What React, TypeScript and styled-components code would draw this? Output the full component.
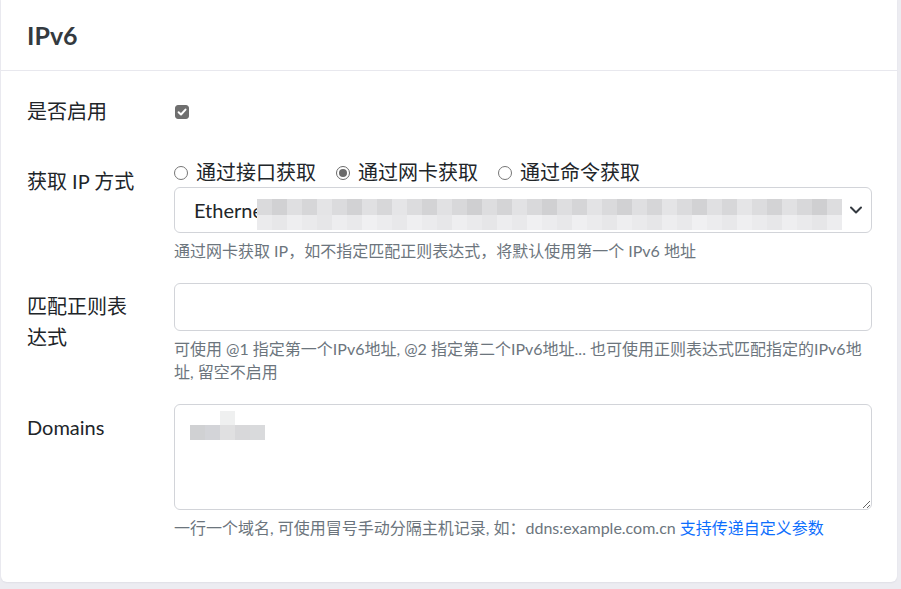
import React from "react";
import styled, { createGlobalStyle } from "styled-components";

const GlobalStyle = createGlobalStyle`
  html, body { margin: 0; padding: 0; background: #ececf1; }
  body {
    font-family: Lato, "Noto Sans CJK SC", sans-serif;
    color: #212529;
  }
  * { box-sizing: border-box; }
`;

const Page = styled.div`
  width: 901px;
  padding: 0 4px 7px 1px;
`;

const Card = styled.section`
  background: #fff;
  border-radius: 0 0 6px 6px;
  box-shadow: 0 1px 2px rgba(30, 30, 60, 0.06);
`;

const CardHeader = styled.header`
  height: 71px;
  display: flex;
  align-items: center;
  padding: 0 26px;
  border-bottom: 1px solid #e8e8ee;
`;

const Title = styled.h5`
  margin: 0;
  font-size: 25px;
  font-weight: 700;
  line-height: 1;
  color: #343a40;
`;

const CardBody = styled.div`
  padding: 17px 25px 22px 26px;
`;

const FormRow = styled.div`
  display: grid;
  grid-template-columns: 110px 1fr;
  column-gap: 37px;
  margin-bottom: 21px;
`;

const Label = styled.label`
  font-size: 20px;
  line-height: 31px;
  padding: 8px 0 9px;
  color: #212529;
`;

const Field = styled.div`
  min-width: 0;
`;

const CheckWrap = styled.div`
  height: 49px;
  display: flex;
  align-items: center;
  padding: 0 0 2px 1px;
`;

const CheckBox = styled.span<{ $checked: boolean }>`
  width: 14px;
  height: 14px;
  border-radius: 3px;
  background: ${(p) => (p.$checked ? "#6f6f6f" : "#fff")};
  border: 1px solid #6f6f6f;
  display: inline-flex;
  align-items: center;
  justify-content: center;
`;

const RadioGroup = styled.div`
  height: 29px;
  display: flex;
  align-items: center;
`;

const RadioItem = styled.label`
  display: inline-flex;
  align-items: center;
  gap: 8px;
  margin-right: 20px;
  font-size: 20px;
  line-height: 29px;
  color: #212529;
`;

const RadioDot = styled.span<{ $checked: boolean }>`
  width: 14px;
  height: 14px;
  border-radius: 50%;
  border: ${(p) => (p.$checked ? "1.5px solid #6a6a6a" : "1px solid #767676")};
  display: inline-flex;
  align-items: center;
  justify-content: center;
  &::after {
    content: "";
    width: 8px;
    height: 8px;
    border-radius: 50%;
    background: ${(p) => (p.$checked ? "#6a6a6a" : "transparent")};
  }
`;

const SelectBox = styled.div`
  position: relative;
  height: 46px;
  border: 1px solid #d2d4d9;
  border-radius: 6px;
  display: flex;
  align-items: center;
  padding-left: 19px;
  font-size: 20px;
  color: #212529;
  overflow: hidden;
`;

const Chevron = styled.svg`
  position: absolute;
  right: 8px;
  top: 50%;
  transform: translateY(-50%);
`;

const MosaicGrid = styled.div<{ $left: number; $top: number }>`
  position: absolute;
  left: ${(p) => p.$left}px;
  top: ${(p) => p.$top}px;
  display: flex;
  flex-direction: column;
`;

const MosaicRow = styled.div<{ $h: number }>`
  display: flex;
  height: ${(p) => p.$h}px;
`;

const MosaicCell = styled.span<{ $c: string }>`
  width: 15px;
  height: 100%;
  background: ${(p) => p.$c};
`;

const TextInput = styled.input`
  display: block;
  width: 100%;
  height: 48px;
  border: 1px solid #d2d4d9;
  border-radius: 6px;
  font-size: 20px;
  padding: 0 19px;
  font-family: inherit;
  outline: none;
`;

const AreaWrap = styled.div`
  position: relative;
`;

const TextArea = styled.textarea`
  display: block;
  width: 100%;
  height: 106px;
  border: 1px solid #d2d4d9;
  border-radius: 6px;
  font-size: 20px;
  padding: 8px 19px;
  font-family: inherit;
  resize: vertical;
  outline: none;
`;

const Help = styled.div`
  margin-top: 6px;
  font-size: 16px;
  line-height: 23px;
  color: #6c757d;
`;

const Link = styled.a`
  color: #0d6efd;
  text-decoration: none;
`;

const shade = (v: number) => `rgb(${v},${v},${Math.min(255, v + 2)})`;

const selectTop = Array.from({ length: 39 }, (_, i) =>
  shade(0xcf + ((i * 37 + 11) % 23))
);
const selectBottom = Array.from({ length: 39 }, (_, i) =>
  shade(0xe6 + ((i * 29 + 5) % 11))
);

const domainRows: { h: number; cells: string[] }[] = [
  { h: 14, cells: ["transparent", "transparent", "#eff0f0", "transparent", "transparent"] },
  { h: 15, cells: ["#d0d1d3", "#d3d4d8", "#e0e0e1", "#d8d8da", "#d9dadc"] },
];

const Mosaic: React.FC<{
  left: number;
  top: number;
  rows: { h: number; cells: string[] }[];
}> = ({ left, top, rows }) => (
  <MosaicGrid $left={left} $top={top} aria-hidden>
    {rows.map((r, ri) => (
      <MosaicRow key={ri} $h={r.h}>
        {r.cells.map((c, ci) => (
          <MosaicCell key={ci} $c={c} />
        ))}
      </MosaicRow>
    ))}
  </MosaicGrid>
);

export default function App() {
  return (
    <>
      <GlobalStyle />
      <Page>
        <Card>
          <CardHeader>
            <Title>IPv6</Title>
          </CardHeader>
          <CardBody>
            <FormRow>
              <Label>是否启用</Label>
              <Field>
                <CheckWrap>
                  <CheckBox $checked>
                    <svg width="10" height="10" viewBox="0 0 10 10">
                      <path
                        d="M1.6 5.2 L4 7.5 L8.5 2.6"
                        fill="none"
                        stroke="#fff"
                        strokeWidth="2"
                        strokeLinecap="round"
                        strokeLinejoin="round"
                      />
                    </svg>
                  </CheckBox>
                </CheckWrap>
              </Field>
            </FormRow>

            <FormRow>
              <Label>获取 IP 方式</Label>
              <Field>
                <RadioGroup>
                  <RadioItem>
                    <RadioDot $checked={false} />
                    通过接口获取
                  </RadioItem>
                  <RadioItem>
                    <RadioDot $checked />
                    通过网卡获取
                  </RadioItem>
                  <RadioItem>
                    <RadioDot $checked={false} />
                    通过命令获取
                  </RadioItem>
                </RadioGroup>
                <SelectBox>
                  Ethernet
                  <Mosaic
                    left={82}
                    top={11}
                    rows={[
                      { h: 16, cells: selectTop },
                      { h: 15, cells: selectBottom },
                    ]}
                  />
                  <Chevron width="14" height="10" viewBox="0 0 14 10">
                    <path
                      d="M2 2.5 L7 7.5 L12 2.5"
                      fill="none"
                      stroke="#343a40"
                      strokeWidth="2"
                      strokeLinecap="round"
                      strokeLinejoin="round"
                    />
                  </Chevron>
                </SelectBox>
                <Help>通过网卡获取 IP，如不指定匹配正则表达式，将默认使用第一个 IPv6 地址</Help>
              </Field>
            </FormRow>

            <FormRow>
              <Label>匹配正则表达式</Label>
              <Field>
                <TextInput type="text" />
                <Help>
                  可使用 @1 指定第一个IPv6地址, @2 指定第二个IPv6地址... 也可使用正则表达式匹配指定的IPv6地址, 留空不启用
                </Help>
              </Field>
            </FormRow>

            <FormRow>
              <Label>Domains</Label>
              <Field>
                <AreaWrap>
                  <TextArea />
                  <Mosaic left={16} top={7} rows={domainRows} />
                </AreaWrap>
                <Help>
                  一行一个域名, 可使用冒号手动分隔主机记录, 如：ddns:example.com.cn{" "}
                  <Link href="#">支持传递自定义参数</Link>
                </Help>
              </Field>
            </FormRow>
          </CardBody>
        </Card>
      </Page>
    </>
  );
}
